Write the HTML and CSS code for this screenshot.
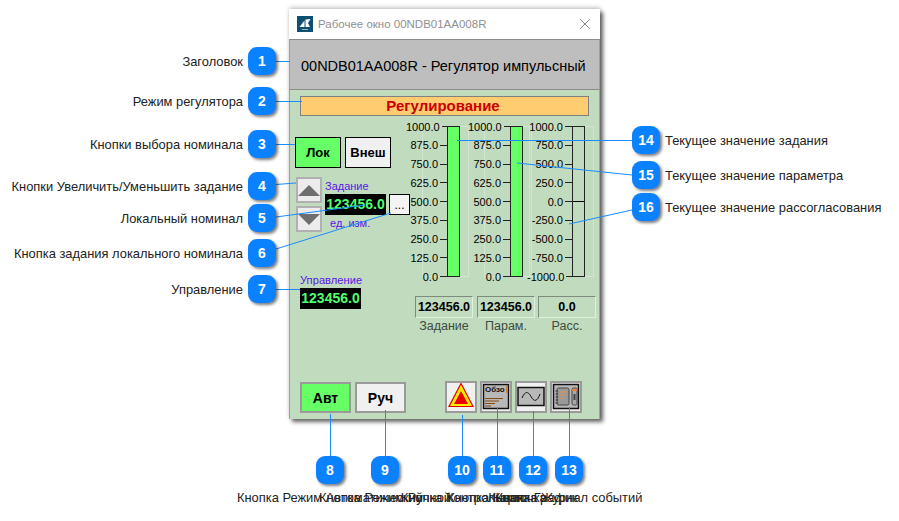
FILE: index.html
```html
<!DOCTYPE html>
<html lang="en">
<head>
    <meta charset="UTF-8">
    <title>Рабочее окно 00NDB01AA008R</title>
    <link rel="stylesheet" href="styles.css">
</head>
<body>
    <div class="window">
        <div class="titlebar">
            <svg class="logo" width="16" height="16" viewBox="0 0 16 16">
                <rect width="16" height="16" fill="#0f4f6f"/>
                <path d="M2.5 11 L7.5 4.5 V11 Z" fill="#fff"/>
                <path d="M8.5 3.5 L13.5 3 L11 7 L13 11 H8.5 Z" fill="#fff"/>
                <rect x="5" y="13" width="6" height="1" fill="#8fb4c8"/>
            </svg>
            <span class="title-text">Рабочее окно 00NDB01AA008R</span>
            <svg class="close" width="10" height="10" viewBox="0 0 10 10">
                <path d="M0 0 L10 10 M10 0 L0 10" stroke="#8a8a8a" stroke-width="1" fill="none"/>
            </svg>
        </div>
        <div class="header">00NDB01AA008R - Регулятор импульсный</div>
        <div class="panel">
            <div class="mode">Регулирование</div>
            <div class="main">
                <div class="left">
                    <div class="nominal">
                        <button class="btn-nom on">Лок</button>
                        <button class="btn-nom">Внеш</button>
                    </div>
                    <div class="spin">
                        <div class="arrows">
                            <div class="arrow"><span class="tri-up"></span></div>
                            <div class="arrow"><span class="tri-down"></span></div>
                        </div>
                        <div class="setpoint">
                            <div class="tag">Задание</div>
                            <div class="setpoint-row">
                                <div class="display">123456.0</div>
                                <button class="dots">...</button>
                            </div>
                            <div class="tag unit">ед. изм.</div>
                        </div>
                    </div>
                    <div class="control">
                        <div class="tag">Управление</div>
                        <div class="display">123456.0</div>
                    </div>
                </div>
                <div class="right">
                    <div class="gauges">
                        <div class="gauge g1">
                            <div class="scale">
                                <span>1000.0</span><span>875.0</span><span>750.0</span><span>625.0</span><span>500.0</span><span>375.0</span><span>250.0</span><span>125.0</span><span>0.0</span>
                            </div>
                            <div class="bar full"></div>
                        </div>
                        <div class="gauge g2">
                            <div class="scale">
                                <span>1000.0</span><span>875.0</span><span>750.0</span><span>625.0</span><span>500.0</span><span>375.0</span><span>250.0</span><span>125.0</span><span>0.0</span>
                            </div>
                            <div class="bar full"></div>
                        </div>
                        <div class="gauge g3">
                            <div class="scale">
                                <span>1000.0</span><span>750.0</span><span>500.0</span><span>250.0</span><span>0.0</span><span>-250.0</span><span>-500.0</span><span>-750.0</span><span>-1000.0</span>
                            </div>
                            <div class="bar"><i class="zero"></i></div>
                        </div>
                    </div>
                    <div class="readouts">
                        <div class="readout"><div class="value">123456.0</div><div class="caption">Задание</div></div>
                        <div class="readout"><div class="value">123456.0</div><div class="caption">Парам.</div></div>
                        <div class="readout"><div class="value">0.0</div><div class="caption">Расс.</div></div>
                    </div>
                </div>
            </div>
            <div class="bottom">
                <button class="btn-mode on">Авт</button>
                <button class="btn-mode">Руч</button>
                <div class="tools">
                    <div class="tool">
                        <svg width="28" height="28" viewBox="0 0 28 28">
                            <path d="M14 .5 L26 23.5 L2 23.5 Z" fill="#ffee00" stroke="#e00000" stroke-width="1.2"/>
                            <path d="M14 8 L21 21 L7 21 Z" fill="#ee0000"/>
                        </svg>
                    </div>
                    <div class="tool">
                        <svg width="28" height="28" viewBox="0 0 28 28">
                            <rect x="1.5" y="1.5" width="25" height="24" fill="#b8b8b8" stroke="#111" stroke-width="1.5"/>
                            <text x="3" y="9" class="icon-text">Обзо</text>
                            <path d="M24.5 3 V10" stroke="#c87a30"/>
                            <path d="M3 15.5 H21 M3 18 H17 M3 20.5 H13 M3 23 H9" stroke="#8a4b10" stroke-width="1"/>
                        </svg>
                    </div>
                    <div class="tool">
                        <svg width="28" height="28" viewBox="0 0 28 28">
                            <rect x="1" y="4.5" width="26" height="18" fill="#b8b8b8" stroke="#111" stroke-width="1.5"/>
                            <path d="M5 15 C8 8 11 8 14 13.5 C17 19 20 19 23 11" fill="none" stroke="#111" stroke-width="1"/>
                        </svg>
                    </div>
                    <div class="tool">
                        <svg width="28" height="28" viewBox="0 0 28 28">
                            <rect x="1.5" y="1.5" width="25" height="24" fill="#b8b8b8" stroke="#111" stroke-width="1.5"/>
                            <rect x="5" y="5" width="12" height="17" rx="1.5" fill="#999" stroke="#444"/>
                            <path d="M3.5 8 H6 M3.5 11 H6 M3.5 14 H6 M3.5 17 H6 M3.5 20 H6" stroke="#333"/>
                            <path d="M8 9 H15 M8 12 H14 M8 15 H12" stroke="#e8924a"/>
                            <rect x="20" y="5" width="5" height="17" rx="1.5" fill="#a8a8a8" stroke="#444"/>
                            <path d="M20 7 H25" stroke="#e8823a" stroke-width="2"/>
                            <rect x="21.5" y="11" width="2" height="6" fill="#444"/>
                        </svg>
                    </div>
                </div>
            </div>
        </div>
    </div>

    <svg class="leaders" width="899" height="521" viewBox="0 0 899 521">
        <g stroke="#1a8cff" stroke-width="1" fill="none">
            <path d="M276 61.5 H290"/>
            <path d="M276 101.5 H302"/>
            <path d="M276 144.5 H295"/>
            <path d="M276 184.5 L296 183"/>
            <path d="M276 217 L365 205"/>
            <path d="M276 249 L391 213"/>
            <path d="M276 289.5 H300"/>
            <path d="M330.5 456 V414"/>
            <path d="M385.5 456 V410"/>
            <path d="M462.5 456 V415"/>
            <path d="M497.5 456 V407"/>
            <path d="M533.5 456 V411"/>
            <path d="M569.5 456 V407"/>
            <path d="M632 140.5 H457"/>
            <path d="M632 175 L517 163"/>
            <path d="M632 210 L569 224"/>
        </g>
    </svg>

    <div class="callout left-side c1"><span>Заголовок</span><b>1</b></div>
    <div class="callout left-side c2"><span>Режим регулятора</span><b>2</b></div>
    <div class="callout left-side c3"><span>Кнопки выбора номинала</span><b>3</b></div>
    <div class="callout left-side c4"><span>Кнопки Увеличить/Уменьшить задание</span><b>4</b></div>
    <div class="callout left-side c5"><span>Локальный номинал</span><b>5</b></div>
    <div class="callout left-side c6"><span>Кнопка задания локального номинала</span><b>6</b></div>
    <div class="callout left-side c7"><span>Управление</span><b>7</b></div>

    <div class="callout under c8"><b>8</b><span>Кнопка Режим Автоматический</span></div>
    <div class="callout under c9"><b>9</b><span>Кнопка Режим Ручной</span></div>
    <div class="callout under c10"><b>10</b><span>Кнопка Контрольная</span></div>
    <div class="callout under c11"><b>11</b><span>Кнопка Карточка</span></div>
    <div class="callout under c12"><b>12</b><span>Кнопка График</span></div>
    <div class="callout under c13"><b>13</b><span>Кнопка Журнал событий</span></div>

    <div class="callout right-side c14"><b>14</b><span>Текущее значение задания</span></div>
    <div class="callout right-side c15"><b>15</b><span>Текущее значение параметра</span></div>
    <div class="callout right-side c16"><b>16</b><span>Текущее значение рассогласования</span></div>
</body>
</html>
```

FILE: styles.css
```css
* {
    box-sizing: border-box;
}
body {
    margin: 0;
    width: 899px;
    height: 521px;
    position: relative;
    overflow: hidden;
    background: white;
    font-family: 'Liberation Sans', Arial, sans-serif;
    font-size: 12.9px;
    color: #222;
}
button {
    font-family: inherit;
    padding: 0;
}

/* window */
.window {
    position: absolute;
    left: 289px;
    top: 9px;
    width: 311px;
    height: 410px;
    display: flex;
    flex-direction: column;
    background: white;
    box-shadow: 3px 3px 4px rgba(0, 0, 0, 0.6), 0 -2px 4px rgba(0, 0, 0, 0.2);
}
.titlebar {
    height: 30px;
    display: flex;
    align-items: center;
    padding: 0 10px 0 8px;
}
.logo {
    margin-right: 5px;
}
.title-text {
    flex: 1;
    color: #909090;
    font-size: 11.5px;
}
.header {
    height: 51px;
    padding: 2px 0 0 11px;
    display: flex;
    align-items: center;
    background: #bebebe;
    border: 1px solid #8c8c8c;
    border-left-color: #a0a0a0;
    border-right-color: #a0a0a0;
    color: #000;
    font-size: 14.5px;
}
.panel {
    flex: 1;
    display: flex;
    flex-direction: column;
    padding: 6px 0 6px 5px;
    background: #c0dbbe;
    border-left: 1px solid #a0a0a0;
    border-right: 1px solid #a0a0a0;
}
.mode {
    width: 289px;
    height: 20px;
    margin-left: 5px;
    padding-right: 3px;
    background: #ffcc70;
    border: 1px solid #808080;
    color: #cc0000;
    font-size: 15px;
    font-weight: bold;
    line-height: 18px;
    text-align: center;
}

/* left part */
.main {
    display: flex;
}
.left {
    width: 111px;
    padding-top: 21px;
}
.nominal {
    display: flex;
    gap: 4px;
}
.btn-nom {
    width: 46px;
    height: 31px;
    background: #f0f0f0;
    border: 1px solid #000;
    color: #000;
    font-size: 13px;
    font-weight: bold;
}
.btn-nom.on, .btn-mode.on {
    background: #66ff66;
}
.spin {
    display: flex;
    margin: 9px 0 0 1px;
}
.arrows {
    display: flex;
    flex-direction: column;
    gap: 3px;
}
.arrow {
    width: 26px;
    height: 26px;
    display: flex;
    align-items: center;
    justify-content: center;
    background: #ececec;
    border: 2px solid #b0b0b0;
}
.tri-up, .tri-down {
    width: 0;
    height: 0;
    border-left: 11px solid transparent;
    border-right: 11px solid transparent;
}
.tri-up {
    border-bottom: 11px solid #6e6e6e;
}
.tri-down {
    border-top: 11px solid #6e6e6e;
}
.setpoint {
    margin-left: 3px;
}
.tag {
    height: 17px;
    line-height: 18px;
    color: #5b14e8;
    font-size: 11px;
}
.unit {
    padding-left: 5px;
    line-height: 16px;
}
.setpoint-row {
    display: flex;
    gap: 3px;
}
.display {
    width: 61px;
    height: 21px;
    background: #000;
    color: #50ff70;
    font-size: 14px;
    font-weight: bold;
    line-height: 21px;
    text-align: center;
}
.dots {
    width: 21px;
    height: 21px;
    background: #f4f4f4;
    border: 1px solid #000;
    color: #000;
    font-size: 12px;
}
.control {
    margin: 39px 0 0 5px;
}
.control .tag {
    font-size: 11.2px;
}

/* gauges */
.right {
    padding-top: 10px;
}
.gauges {
    display: flex;
    gap: 8px;
}
.gauge {
    position: relative;
    display: flex;
    height: 151px;
}
.gauge::before {
    content: "";
    position: absolute;
    top: 0;
    bottom: 0;
    border: 1px solid #d3e4d2;
}
.g1::before {
    left: 16px;
    width: 45px;
}
.g2::before {
    left: 16px;
    width: 46px;
}
.g3::before {
    left: 2px;
    width: 63px;
}
.g2 {
    margin-right: -4px;
}
.scale {
    position: relative;
    width: 41px;
    display: flex;
    flex-direction: column;
    justify-content: space-between;
    color: #000;
    font-size: 11px;
}
.g2 .scale {
    width: 42px;
}
.g3 .scale {
    width: 45px;
}
.scale span {
    height: 1px;
    display: flex;
    align-items: center;
    justify-content: flex-end;
    white-space: nowrap;
}
.scale span::after {
    content: "";
    width: 7px;
    height: 1px;
    margin-left: 2px;
    background: #222;
}
.bar {
    position: relative;
    width: 13px;
    border: 1px solid #222;
    display: flex;
    align-items: center;
}
.bar.full {
    background: #66ff66;
}
.zero {
    width: 100%;
    height: 1px;
    background: #000;
}
.readouts {
    display: flex;
    gap: 4px;
    margin: 19px 0 0 9px;
}
.readout {
    width: 58px;
}
.readout:last-child {
    margin-left: -1px;
}
.value {
    height: 22px;
    border: 1px solid;
    border-color: #7d8c7c #e0f0de #e0f0de #7d8c7c;
    color: #000;
    font-size: 12.5px;
    font-weight: bold;
    line-height: 20px;
    text-align: center;
}
.caption {
    margin-top: 1px;
    color: #404a40;
    font-size: 12.5px;
    line-height: 15px;
    text-align: center;
}

/* bottom buttons */
.bottom {
    margin-top: auto;
    margin-left: 5px;
    display: flex;
    align-items: flex-end;
    gap: 4px;
}
.btn-mode {
    width: 51px;
    height: 31px;
    background: #f0f0f0;
    border: 2px solid #9a9a9a;
    color: #000;
    font-size: 14px;
    font-weight: bold;
}
.tools {
    display: flex;
    gap: 3px;
    margin-left: 35px;
}
.tool {
    width: 32px;
    height: 32px;
    display: flex;
    align-items: center;
    justify-content: center;
    background: #f0f0f0;
    border: 2px solid #9a9a9a;
}
.icon-text {
    font-family: 'Liberation Sans', Arial, sans-serif;
    font-size: 8px;
    font-weight: bold;
    fill: #111;
}

/* annotations */
.leaders {
    position: absolute;
    left: 0;
    top: 0;
}
.callout {
    position: absolute;
    display: flex;
    align-items: center;
    white-space: nowrap;
}
.callout b {
    flex: none;
    width: 28px;
    height: 28px;
    display: flex;
    align-items: center;
    justify-content: center;
    background: #0a82ff;
    border-radius: 9px;
    box-shadow: 2px 2px 3px rgba(0, 0, 0, 0.5);
    color: white;
    font-size: 14px;
}
.left-side {
    right: 623px;
    gap: 5px;
}
.right-side {
    left: 632px;
    gap: 5px;
}
.under {
    top: 456px;
    width: 200px;
    flex-direction: column;
    gap: 6px;
}
.c1 { top: 47px; }
.c2 { top: 87px; }
.c3 { top: 130px; }
.c4 { top: 172px; }
.c5 { top: 204px; }
.c6 { top: 239px; }
.c7 { top: 275px; }
.c8 { left: 230px; }
.c9 { left: 285px; }
.c10 { left: 362px; }
.c11 { left: 397px; }
.c12 { left: 433px; }
.c13 { left: 469px; }
.c14 { top: 126px; }
.c15 { top: 161px; }
.c16 { top: 193px; }
```
